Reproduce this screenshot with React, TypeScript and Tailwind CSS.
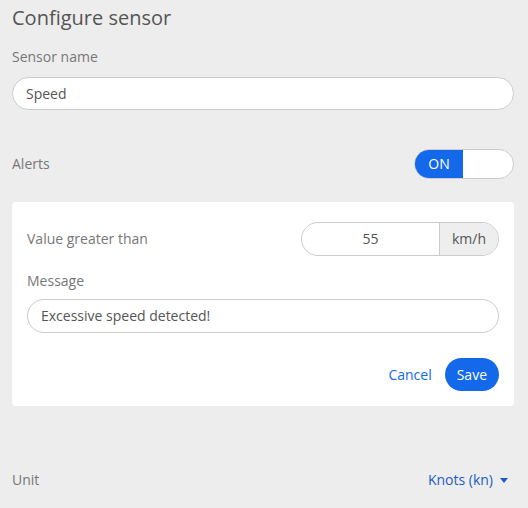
import { useState } from 'react';

export default function App() {
  const [alertsOn, setAlertsOn] = useState(true);

  return (
    <div className="min-h-[508px] w-[528px] bg-[#ededed] pl-3 pr-[14px] font-['Open_Sans',sans-serif] text-sm text-[#777]">
      <h1 className="pt-[4px] text-[20px] leading-[27px] text-[#555]">Configure sensor</h1>

      <label className="mt-[16px] block leading-[19px]">Sensor name</label>
      <div className="mt-[11px] flex h-[33px] items-center rounded-full border border-[#ccc] bg-white px-[13px] text-[#555]">
        Speed
      </div>

      <div className="mt-[39px] flex items-center justify-between">
        <span>Alerts</span>
        <button
          onClick={() => setAlertsOn(!alertsOn)}
          className="flex h-[30px] w-[100px] overflow-hidden rounded-full border border-[#ccc] bg-white"
        >
          <span className="flex w-[48px] items-center justify-center bg-[#1469ea] text-white">
            ON
          </span>
          <span className="flex-1" />
        </button>
      </div>

      <div className="mt-[23px] rounded-[4px] bg-white px-[15px] pt-[20px] pb-[15px]">
        <div className="flex items-center justify-between">
          <span>Value greater than</span>
          <div className="flex h-[34px] w-[198px] overflow-hidden rounded-full border border-[#ccc]">
            <span className="flex flex-1 items-center justify-center text-[#555]">55</span>
            <span className="flex w-[59px] items-center justify-center border-l border-[#ccc] bg-[#eee] text-[#555]">
              km/h
            </span>
          </div>
        </div>

        <label className="mt-[15px] block leading-[19px]">Message</label>
        <div className="mt-[9px] flex h-[34px] items-center rounded-full border border-[#ccc] px-[13px] text-[#555]">
          Excessive speed detected!
        </div>

        <div className="mt-[25px] flex items-center justify-end gap-[13px]">
          <button className="text-[#1469ea]">Cancel</button>
          <button className="h-[33px] rounded-full bg-[#1469ea] px-[12px] text-white">Save</button>
        </div>
      </div>

      <div className="mt-[64px] flex items-center justify-between">
        <span>Unit</span>
        <button className="mr-[6px] flex items-center gap-[7px] text-[#1a5dc4]">
          Knots (kn)
          <svg width="8" height="5" viewBox="0 0 8 5">
            <path d="M0 0h8L4 5z" fill="currentColor" />
          </svg>
        </button>
      </div>
    </div>
  );
}
